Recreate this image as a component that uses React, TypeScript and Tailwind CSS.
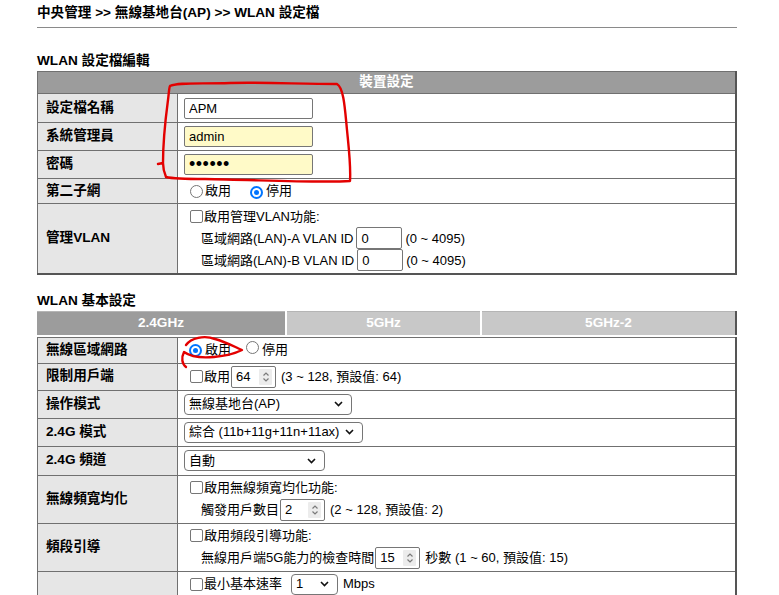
import React from "react";

const FONT = "font-['Liberation_Sans','Noto_Sans_CJK_TC',sans-serif]";

function Radio({ checked }: { checked?: boolean }) {
  return checked ? (
    <span className="inline-flex w-[13px] h-[13px] rounded-full border-2 border-[#0075ff] items-center justify-center bg-white shrink-0">
      <span className="w-[5px] h-[5px] rounded-full bg-[#0075ff]" />
    </span>
  ) : (
    <span className="inline-block w-[13px] h-[13px] rounded-full border border-[#767676] bg-white shrink-0" />
  );
}

function Checkbox() {
  return <span className="inline-block w-[13px] h-[13px] rounded-[2px] border border-[#767676] bg-white shrink-0" />;
}

function TextBox({ value, yellow, password }: { value: string; yellow?: boolean; password?: boolean }) {
  return (
    <input
      readOnly
      type={password ? "password" : "text"}
      defaultValue={value}
      className={`w-[129px] h-[21px] border border-[#767676] rounded-[2px] px-[4px] text-black outline-none ${FONT} ${
        yellow ? "bg-[#fffac8]" : "bg-white"
      } ${password ? "text-[18px] leading-[18px] tracking-[0.5px]" : "text-[13px]"}`}
    />
  );
}

function Spinner() {
  return (
    <span className="flex items-center justify-center w-[13px] h-[16px] bg-[#ececec] rounded-[1px]">
      <svg width="8" height="12" viewBox="0 0 8 12" fill="none" stroke="#7a7a7a" strokeWidth="1.2">
        <path d="M1.5 4.5 L4 2 L6.5 4.5" />
        <path d="M1.5 7.5 L4 10 L6.5 7.5" />
      </svg>
    </span>
  );
}

function NumBox({ value, w = 45 }: { value: string; w?: number }) {
  return (
    <span
      className="inline-flex items-center justify-between h-[22px] border border-[#767676] rounded-[2px] bg-white pl-[4px] pr-[3px] text-[13px]"
      style={{ width: w }}
    >
      <span>{value}</span>
      <Spinner />
    </span>
  );
}

function PlainBox({ value, w = 46 }: { value: string; w?: number }) {
  return (
    <span
      className="inline-flex items-center h-[22px] border border-[#767676] rounded-[2px] bg-white px-[4px] text-[13px]"
      style={{ width: w }}
    >
      {value}
    </span>
  );
}

function Select({ text, w }: { text: string; w: number }) {
  return (
    <span
      className="inline-flex items-center justify-between h-[21px] border border-[#767676] rounded-[4px] bg-white pl-[4px] pr-[8px] text-[13px]"
      style={{ width: w }}
    >
      <span>{text}</span>
      <svg width="9" height="6" viewBox="0 0 9 6" fill="none" stroke="#111" strokeWidth="1.6">
        <path d="M1 1 L4.5 4.5 L8 1" />
      </svg>
    </span>
  );
}

function Label({ children }: { children: React.ReactNode }) {
  return (
    <td className="bg-[#e6e6e6] border border-[#707070] pl-[8px] font-bold text-[13.6px] text-black align-middle">
      {children}
    </td>
  );
}

function Value({ children }: { children: React.ReactNode }) {
  return <td className="bg-white border border-[#707070] pl-[6px] text-[13px] text-black align-middle">{children}</td>;
}

export default function App() {
  return (
    <div className={`relative w-[779px] h-[595px] overflow-hidden bg-white ${FONT} text-black`}>
      <div className="ml-[37px] w-[700px] pt-[5px]">
        <div className="text-[13.6px] font-bold leading-[16px]">中央管理 &gt;&gt; 無線基地台(AP) &gt;&gt; WLAN 設定檔</div>
        <div className="mt-[6px] h-px bg-[#8a8a8a]" />

        <div className="mt-[25px] text-[13.6px] font-bold leading-[16px]">WLAN 設定檔編輯</div>
        <table className="mt-[2px] w-[700px] border-collapse border-r-2 border-b-2 border-[#555] table-fixed">
          <colgroup>
            <col className="w-[140px]" />
            <col />
          </colgroup>
          <tbody>
            <tr className="h-[22px]">
              <td colSpan={2} className="bg-[#9c9c9c] text-white font-bold text-[13.6px] text-center border border-[#707070]">
                裝置設定
              </td>
            </tr>
            <tr className="h-[29px]">
              <Label>設定檔名稱</Label>
              <Value>
                <TextBox value="APM" />
              </Value>
            </tr>
            <tr className="h-[28px]">
              <Label>系統管理員</Label>
              <Value>
                <TextBox value="admin" yellow />
              </Value>
            </tr>
            <tr className="h-[28px]">
              <Label>密碼</Label>
              <Value>
                <TextBox value="123456" yellow password />
              </Value>
            </tr>
            <tr className="h-[25px]">
              <Label>第二子網</Label>
              <Value>
                <div className="flex items-center pl-[6px]">
                  <Radio />
                  <span className="ml-[2px]">啟用</span>
                  <span className="ml-[19px]">
                    <Radio checked />
                  </span>
                  <span className="ml-[3px]">停用</span>
                </div>
              </Value>
            </tr>
            <tr className="h-[70px]">
              <Label>管理VLAN</Label>
              <Value>
                <div className="flex flex-col">
                  <div className="flex items-center h-[22px] pl-[6px]">
                    <Checkbox />
                    <span className="ml-[1px]">啟用管理VLAN功能:</span>
                  </div>
                  <div className="flex items-center h-[22px] pl-[17px]">
                    <span>區域網路(LAN)-A VLAN ID</span>
                    <span className="ml-[3px]">
                      <PlainBox value="0" />
                    </span>
                    <span className="ml-[3px]">(0 ~ 4095)</span>
                  </div>
                  <div className="flex items-center h-[22px] pl-[17px]">
                    <span>區域網路(LAN)-B VLAN ID</span>
                    <span className="ml-[3px]">
                      <PlainBox value="0" />
                    </span>
                    <span className="ml-[3px]">(0 ~ 4095)</span>
                  </div>
                </div>
              </Value>
            </tr>
          </tbody>
        </table>

        <div className="mt-[18px] text-[13.6px] font-bold leading-[16px]">WLAN 基本設定</div>
        <div className="mt-[2px] flex gap-[2px] h-[24px] border-r-2 border-[#555] text-white font-bold text-[13.6px]">
          <div className="w-[248px] bg-[#9c9c9c] border-t border-[#b5b5b5] flex items-center justify-center">2.4GHz</div>
          <div className="w-[193px] bg-[#c8c8c8] border-t border-[#b5b5b5] flex items-center justify-center">5GHz</div>
          <div className="flex-1 bg-[#c8c8c8] border-t border-[#b5b5b5] flex items-center justify-center">5GHz-2</div>
        </div>
        <table className="mt-[2px] w-[700px] border-collapse border-r-2 border-[#555] table-fixed">
          <colgroup>
            <col className="w-[140px]" />
            <col />
          </colgroup>
          <tbody>
            <tr className="h-[26px]">
              <Label>無線區域網路</Label>
              <Value>
                <div className="flex items-center pl-[5px]">
                  <Radio checked />
                  <span className="ml-[3px]">啟用</span>
                  <span className="ml-[15px]">
                    <Radio />
                  </span>
                  <span className="ml-[3px]">停用</span>
                </div>
              </Value>
            </tr>
            <tr className="h-[27px]">
              <Label>限制用戶端</Label>
              <Value>
                <div className="flex items-center pl-[6px]">
                  <Checkbox />
                  <span className="ml-[1px]">啟用</span>
                  <span className="ml-[1px]">
                    <NumBox value="64" />
                  </span>
                  <span className="ml-[5px]">(3 ~ 128, 預設值: 64)</span>
                </div>
              </Value>
            </tr>
            <tr className="h-[28px]">
              <Label>操作模式</Label>
              <Value>
                <Select text="無線基地台(AP)" w={168} />
              </Value>
            </tr>
            <tr className="h-[28px]">
              <Label>2.4G 模式</Label>
              <Value>
                <Select text="綜合 (11b+11g+11n+11ax)" w={179} />
              </Value>
            </tr>
            <tr className="h-[29px]">
              <Label>2.4G 頻道</Label>
              <Value>
                <Select text="自動" w={141} />
              </Value>
            </tr>
            <tr className="h-[48px]">
              <Label>無線頻寬均化</Label>
              <Value>
                <div className="flex flex-col">
                  <div className="flex items-center h-[22px] pl-[6px]">
                    <Checkbox />
                    <span className="ml-[1px]">啟用無線頻寬均化功能:</span>
                  </div>
                  <div className="flex items-center h-[23px] pl-[17px]">
                    <span>觸發用戶數目</span>
                    <span className="ml-[1px]">
                      <NumBox value="2" />
                    </span>
                    <span className="ml-[5px]">(2 ~ 128, 預設值: 2)</span>
                  </div>
                </div>
              </Value>
            </tr>
            <tr className="h-[48px]">
              <Label>頻段引導</Label>
              <Value>
                <div className="flex flex-col">
                  <div className="flex items-center h-[22px] pl-[6px]">
                    <Checkbox />
                    <span className="ml-[1px]">啟用頻段引導功能:</span>
                  </div>
                  <div className="flex items-center h-[23px] pl-[17px]">
                    <span>無線用戶端5G能力的檢查時間</span>
                    <span className="ml-[1px]">
                      <NumBox value="15" />
                    </span>
                    <span className="ml-[5px]">秒數 (1 ~ 60, 預設值: 15)</span>
                  </div>
                </div>
              </Value>
            </tr>
            <tr className="h-[30px]">
              <Label>{""}</Label>
              <Value>
                <div className="flex items-center pl-[6px] -mt-[4px]">
                  <Checkbox />
                  <span className="ml-[1px]">最小基本速率</span>
                  <span className="ml-[9px]">
                    <Select text="1" w={47} />
                  </span>
                  <span className="ml-[5px]">Mbps</span>
                </div>
              </Value>
            </tr>
          </tbody>
        </table>
      </div>

      <svg className="absolute inset-0 pointer-events-none" width="779" height="595" viewBox="0 0 779 595" fill="none">
        <path
          d="M170,86 C178,82 200,84 230,83 C262,82 300,84 337,84 C344,88 345,110 347,130 C349,150 351,166 350,181 C320,183 262,180 205,179 C188,179 174,179 166,177 C164,172 163,168 163,163 L158,164 M163,163 C163,140 166,115 168,100 C169,92 169,88 170,86"
          stroke="#e30000"
          strokeWidth="2.4"
          strokeLinecap="round"
          strokeLinejoin="round"
        />
        <path
          d="M186,345 C191,338 204,335 215,339 C226,342 235,347 242,350 C234,354 225,356 214,357 C203,358 191,357 184,352 C181,358 182,364 186,367"
          stroke="#e30000"
          strokeWidth="2.4"
          strokeLinecap="round"
          strokeLinejoin="round"
        />
      </svg>
    </div>
  );
}
